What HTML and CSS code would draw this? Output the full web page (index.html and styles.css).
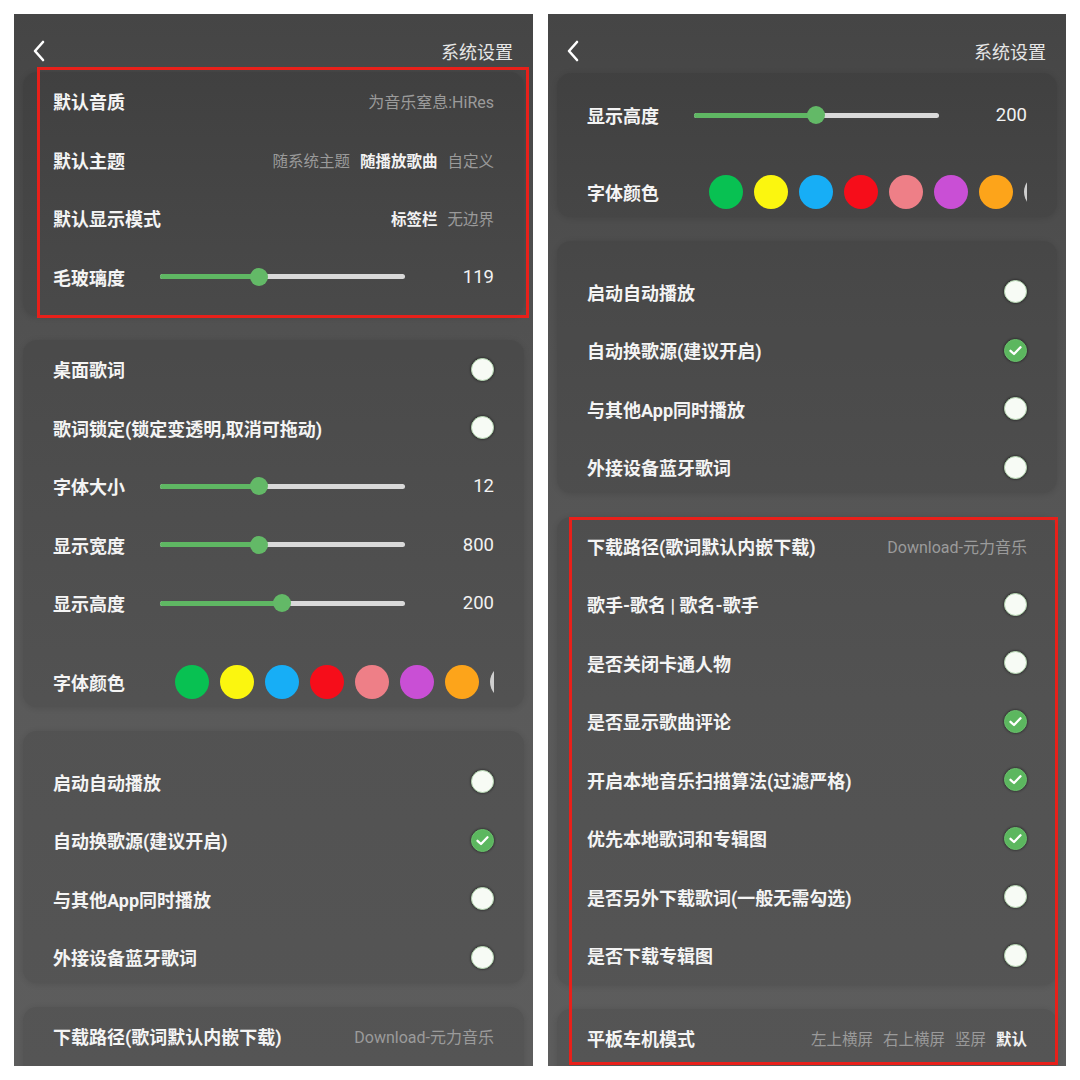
FILE: index.html
```html
<!DOCTYPE html>
<html lang="zh-CN">
<head>
<meta charset="utf-8">
<title>系统设置</title>
<link rel="stylesheet" href="styles.css">
</head>
<body>
<div class="stage">

  <section class="phone">
    <header class="topbar">
      <svg class="back" viewBox="0 0 14 22"><path d="M10 2 L2 11 L10 20"/></svg>
      <span class="title">系统设置</span>
    </header>
    <div class="cards">
      <div class="card card-head">
        <div class="row"><span class="label">默认音质</span><span class="value">为音乐窒息:HiRes</span></div>
        <div class="row"><span class="label">默认主题</span>
          <span class="opts"><span>随系统主题</span><span class="on">随播放歌曲</span><span>自定义</span></span></div>
        <div class="row"><span class="label">默认显示模式</span>
          <span class="opts"><span class="on">标签栏</span><span>无边界</span></span></div>
        <div class="row row-slider"><span class="label">毛玻璃度</span>
          <span class="track"><span class="fill" style="width:40.4%"></span><span class="thumb" style="left:40.4%"></span></span>
          <span class="num">119</span></div>
      </div>

      <div class="card">
        <div class="row"><span class="label">桌面歌词</span><span class="toggle"></span></div>
        <div class="row"><span class="label">歌词锁定(锁定变透明,取消可拖动)</span><span class="toggle"></span></div>
        <div class="row row-slider"><span class="label">字体大小</span>
          <span class="track"><span class="fill" style="width:40.4%"></span><span class="thumb" style="left:40.4%"></span></span>
          <span class="num">12</span></div>
        <div class="row row-slider"><span class="label">显示宽度</span>
          <span class="track"><span class="fill" style="width:40.4%"></span><span class="thumb" style="left:40.4%"></span></span>
          <span class="num">800</span></div>
        <div class="row row-slider"><span class="label">显示高度</span>
          <span class="track"><span class="fill" style="width:49.8%"></span><span class="thumb" style="left:49.8%"></span></span>
          <span class="num">200</span></div>
        <div class="row row-colors"><span class="label">字体颜色</span>
          <span class="swatches">
            <span class="swatch sw-green"></span><span class="swatch sw-yellow"></span><span class="swatch sw-blue"></span><span class="swatch sw-red"></span><span class="swatch sw-pink"></span><span class="swatch sw-purple"></span><span class="swatch sw-orange"></span><span class="swatch sw-grey"></span>
          </span></div>
      </div>

      <div class="card card-top">
        <div class="row"><span class="label">启动自动播放</span><span class="toggle"></span></div>
        <div class="row"><span class="label">自动换歌源(建议开启)</span><span class="toggle on"><svg viewBox="0 0 23 23"><path d="M6.5 11.8 L10 15 L16.5 8.3"/></svg></span></div>
        <div class="row"><span class="label">与其他App同时播放</span><span class="toggle"></span></div>
        <div class="row"><span class="label">外接设备蓝牙歌词</span><span class="toggle"></span></div>
      </div>

      <div class="card card-tail">
        <div class="row"><span class="label">下载路径(歌词默认内嵌下载)</span><span class="value">Download-元力音乐</span></div>
      </div>
    </div>
    <div class="mark mark-left"></div>
  </section>

  <section class="phone phone-right">
    <header class="topbar">
      <svg class="back" viewBox="0 0 14 22"><path d="M10 2 L2 11 L10 20"/></svg>
      <span class="title">系统设置</span>
    </header>
    <div class="cards">
      <div class="card card-slim">
        <div class="row row-slider"><span class="label">显示高度</span>
          <span class="track"><span class="fill" style="width:49.8%"></span><span class="thumb" style="left:49.8%"></span></span>
          <span class="num">200</span></div>
        <div class="row row-colors"><span class="label">字体颜色</span>
          <span class="swatches">
            <span class="swatch sw-green"></span><span class="swatch sw-yellow"></span><span class="swatch sw-blue"></span><span class="swatch sw-red"></span><span class="swatch sw-pink"></span><span class="swatch sw-purple"></span><span class="swatch sw-orange"></span><span class="swatch sw-grey"></span>
          </span></div>
      </div>

      <div class="card card-top">
        <div class="row"><span class="label">启动自动播放</span><span class="toggle"></span></div>
        <div class="row"><span class="label">自动换歌源(建议开启)</span><span class="toggle on"><svg viewBox="0 0 23 23"><path d="M6.5 11.8 L10 15 L16.5 8.3"/></svg></span></div>
        <div class="row"><span class="label">与其他App同时播放</span><span class="toggle"></span></div>
        <div class="row"><span class="label">外接设备蓝牙歌词</span><span class="toggle"></span></div>
      </div>

      <div class="card">
        <div class="row"><span class="label">下载路径(歌词默认内嵌下载)</span><span class="value">Download-元力音乐</span></div>
        <div class="row"><span class="label">歌手-歌名 | 歌名-歌手</span><span class="toggle"></span></div>
        <div class="row"><span class="label">是否关闭卡通人物</span><span class="toggle"></span></div>
        <div class="row"><span class="label">是否显示歌曲评论</span><span class="toggle on"><svg viewBox="0 0 23 23"><path d="M6.5 11.8 L10 15 L16.5 8.3"/></svg></span></div>
        <div class="row"><span class="label">开启本地音乐扫描算法(过滤严格)</span><span class="toggle on"><svg viewBox="0 0 23 23"><path d="M6.5 11.8 L10 15 L16.5 8.3"/></svg></span></div>
        <div class="row"><span class="label">优先本地歌词和专辑图</span><span class="toggle on"><svg viewBox="0 0 23 23"><path d="M6.5 11.8 L10 15 L16.5 8.3"/></svg></span></div>
        <div class="row"><span class="label">是否另外下载歌词(一般无需勾选)</span><span class="toggle"></span></div>
        <div class="row"><span class="label">是否下载专辑图</span><span class="toggle"></span></div>
      </div>

      <div class="card card-tail">
        <div class="row"><span class="label">平板车机模式</span>
          <span class="opts"><span>左上横屏</span><span>右上横屏</span><span>竖屏</span><span class="on">默认</span></span></div>
      </div>
    </div>
    <div class="mark mark-right"></div>
  </section>

</div>
</body>
</html>
```

FILE: styles.css
```css
* { box-sizing: border-box; }

html, body {
  margin: 0;
  padding: 0;
}

body {
  width: 1080px;
  height: 1080px;
  background: #ffffff;
  font-family: Roboto, "Noto Sans CJK SC", sans-serif;
  overflow: hidden;
}

.stage {
  display: flex;
  gap: 15px;
  padding: 14px 0 0 14px;
}

.phone {
  position: relative;
  flex: none;
  width: 519px;
  height: 1052px;
  overflow: hidden;
  display: flex;
  flex-direction: column;
  background: linear-gradient(180deg, #454545 0%, #4a4a4a 12%, #535353 35%, #5a5a5a 65%, #5d5d5d 100%);
}

.phone-right { width: 518px; }

.topbar {
  flex: none;
  height: 58px;
  padding: 16px 20px 0 19px;
  display: flex;
  align-items: center;
  justify-content: space-between;
}

.back {
  width: 14px;
  height: 22px;
  fill: none;
  stroke: #ffffff;
  stroke-width: 2.6;
  stroke-linecap: round;
  stroke-linejoin: round;
}

.title {
  font-size: 18px;
  color: #e6e6e6;
}

.cards {
  display: flex;
  flex-direction: column;
  gap: 24px;
  padding: 0 9px;
}

.card {
  flex: none;
  display: flex;
  flex-direction: column;
  padding: 0 30px;
  border-radius: 14px;
  background: rgba(0, 0, 0, 0.085);
  box-shadow: 0 1px 6px rgba(0, 0, 0, 0.12);
}

.card-head { padding-top: 0; padding-bottom: 10px; }
.card-slim { margin-top: 1px; padding-top: 13px; }
.card-slim .row-colors { margin-top: 22px; }
.card-top { padding-top: 22px; }
.card-top .row:last-child { margin-bottom: -4px; }
.card-tail { padding-bottom: 20px; }

.row {
  flex: none;
  height: 58.5px;
  display: flex;
  align-items: center;
}

.label {
  font-size: 18px;
  font-weight: 700;
  color: #f4f4f4;
  white-space: nowrap;
}

.value {
  margin-left: auto;
  font-size: 16px;
  color: #9b9b9b;
  white-space: nowrap;
}

.opts {
  margin-left: auto;
  display: flex;
  gap: 10px;
  font-size: 15.5px;
  color: #9a9a9a;
  white-space: nowrap;
}

.opts .on {
  color: #f2f2f2;
  font-weight: 700;
}

/* toggles */
.toggle {
  margin-left: auto;
  margin-right: 0;
  flex: none;
  width: 23px;
  height: 23px;
  border-radius: 50%;
  background: #f7fbf5;
  border: 1.5px solid #b4d6b0;
  box-shadow: 0 0 2px 1px rgba(0, 0, 0, 0.3);
  display: flex;
  align-items: center;
  justify-content: center;
}

.toggle.on {
  background: #5cb75f;
  border-color: #68c06b;
}

.toggle svg {
  width: 23px;
  height: 23px;
  flex: none;
  fill: none;
  stroke: #ffffff;
  stroke-width: 2.3;
  stroke-linecap: round;
  stroke-linejoin: round;
}

/* sliders */
.row-slider .label {
  width: 107px;
  flex: none;
}

.track {
  position: relative;
  flex: none;
  width: 245px;
  height: 5px;
  border-radius: 3px;
  background: #d9d9d9;
}

.fill {
  position: absolute;
  left: 0;
  top: 0;
  bottom: 0;
  border-radius: 3px;
  background: #5fb763;
}

.thumb {
  position: absolute;
  top: 50%;
  width: 18px;
  height: 18px;
  margin: -9px 0 0 -9px;
  border-radius: 50%;
  background: #63b967;
}

.num {
  margin-left: auto;
  font-size: 18.5px;
  color: #f2f2f2;
}

/* colour swatches */
.row-colors {
  height: 50px;
  margin-top: 24px;
}

.row-colors .label {
  width: 122px;
  flex: none;
}

.swatches {
  flex: 1;
  display: flex;
  gap: 11px;
  overflow: hidden;
}

.swatch {
  flex: none;
  width: 34px;
  height: 34px;
  border-radius: 50%;
}

.sw-green  { background: #08c152; }
.sw-yellow { background: #fbf60f; }
.sw-blue   { background: #17aef6; }
.sw-red    { background: #f60d1a; }
.sw-pink   { background: #ee7f87; }
.sw-purple { background: #c94fd5; }
.sw-orange { background: #fda41a; }
.sw-grey   { background: #cfcfcf; }

/* red annotation frames */
.mark {
  position: absolute;
  border: 3px solid #e8201a;
  pointer-events: none;
}

.mark-left {
  left: 23px;
  top: 53px;
  width: 492px;
  height: 251px;
}

.mark-right {
  left: 21px;
  top: 503px;
  width: 489px;
  height: 548px;
}
```
